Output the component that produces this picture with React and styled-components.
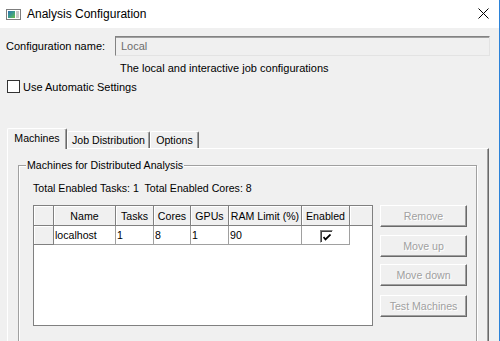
import React from 'react';
import styled, { createGlobalStyle } from 'styled-components';

const GlobalStyle = createGlobalStyle`
  html, body {
    margin: 0;
    padding: 0;
    background: #f0f0f0;
  }
  body {
    font-family: 'Liberation Sans', Arial, sans-serif;
    color: #000;
  }
`;

const columns = [
  { label: 'Name', width: 62 },
  { label: 'Tasks', width: 38 },
  { label: 'Cores', width: 37 },
  { label: 'GPUs', width: 38 },
  { label: 'RAM Limit (%)', width: 73 },
  { label: 'Enabled', width: 48 },
];

const machines = [{ name: 'localhost', tasks: '1', cores: '8', gpus: '1', ram: '90', enabled: true }];

const buttons = [
  { label: 'Remove', top: 0 },
  { label: 'Move up', top: 8 },
  { label: 'Move down', top: 7 },
  { label: 'Test Machines', top: 9 },
];

function App() {
  return (
    <>
      <GlobalStyle />
      <Window>
        <TitleBar>
          <AppIcon />
          <TitleText>Analysis Configuration</TitleText>
          <CloseGlyph />
        </TitleBar>
        <Body>
          <NameRow>
            <FieldLabel>Configuration name:</FieldLabel>
            <NameInput value="Local" readOnly disabled />
          </NameRow>
          <Description>The local and interactive job configurations</Description>
          <CheckRow>
            <Box />
            <span>Use Automatic Settings</span>
          </CheckRow>

          <TabStrip>
            <Tab $active $w={60}>Machines</Tab>
            <Tab $w={83}>Job Distribution</Tab>
            <Tab $w={49}>Options</Tab>
          </TabStrip>

          <Panel>
            <GroupBox>
              <Legend>Machines for Distributed Analysis</Legend>
              <GroupContent>
                <Totals>Total Enabled Tasks: 1&nbsp; Total Enabled Cores: 8</Totals>
                <ContentRow>
                  <Grid>
                    <HeadCell />
                    {columns.map((c) => (
                      <HeadCell key={c.label}>{c.label}</HeadCell>
                    ))}
                    <HeadCell $last />

                    {machines.map((m) => (
                      <React.Fragment key={m.name}>
                        <HeadCell />
                        <DataCell>{m.name}</DataCell>
                        <DataCell>{m.tasks}</DataCell>
                        <DataCell>{m.cores}</DataCell>
                        <DataCell>{m.gpus}</DataCell>
                        <DataCell>{m.ram}</DataCell>
                        <DataCell $center>
                          <MiniCheck>{m.enabled && <CheckMark />}</MiniCheck>
                        </DataCell>
                        <Filler />
                      </React.Fragment>
                    ))}
                  </Grid>
                  <ButtonColumn>
                    {buttons.map((b) => (
                      <ClassicButton key={b.label} $top={b.top} disabled>
                        {b.label}
                      </ClassicButton>
                    ))}
                  </ButtonColumn>
                </ContentRow>
              </GroupContent>
            </GroupBox>
          </Panel>
        </Body>
      </Window>
    </>
  );
}

export default App;

function AppIcon() {
  return (
    <svg width="15" height="11" viewBox="0 0 15 11">
      <defs>
        <linearGradient id="ic" x1="0" y1="0" x2="1" y2="1">
          <stop offset="0" stopColor="#2f6fb3" />
          <stop offset="0.5" stopColor="#3c9c8a" />
          <stop offset="1" stopColor="#6cbf4a" />
        </linearGradient>
      </defs>
      <rect x="0.5" y="0.5" width="14" height="10" fill="#fff" stroke="#7d7d7d" />
      <rect x="2" y="2" width="7" height="7" fill="url(#ic)" />
      <rect x="10" y="2" width="3" height="7" fill="#c9c9c9" />
    </svg>
  );
}

function CloseGlyph() {
  return (
    <CloseSvg width="11" height="11" viewBox="0 0 11 11">
      <path d="M0.5 0.5 L10.5 10.5 M10.5 0.5 L0.5 10.5" stroke="#000" strokeWidth="1" />
    </CloseSvg>
  );
}

function CheckMark() {
  return (
    <svg width="8" height="7" viewBox="0 0 8 7">
      <path d="M0.5 3 L2.5 5.5 L7.5 0.5" stroke="#000" strokeWidth="1.8" fill="none" />
    </svg>
  );
}

const Window = styled.div`
  width: 500px;
  height: 341px;
  box-sizing: border-box;
  border-right: 1px solid #2b82d9;
  background: #f0f0f0;
  display: flex;
  flex-direction: column;
  overflow: hidden;
`;

const TitleBar = styled.div`
  height: 28px;
  flex: 0 0 28px;
  background: #fff;
  display: flex;
  align-items: center;
  padding-left: 6px;
  gap: 6px;
  font-size: 12px;
`;

const TitleText = styled.div`
  flex: 1;
  padding-bottom: 1px;
`;

const CloseSvg = styled.svg`
  margin-right: 10px;
  margin-bottom: 2px;
`;

const Body = styled.div`
  flex: 1;
  min-height: 0;
  display: flex;
  flex-direction: column;
  padding: 8px 9px 0 6px;
  font-size: 11px;
`;

const NameRow = styled.div`
  display: flex;
  align-items: center;
  height: 20px;
`;

const FieldLabel = styled.div`
  width: 109px;
  flex: 0 0 109px;
`;

const NameInput = styled.input`
  flex: 1;
  height: 20px;
  box-sizing: border-box;
  margin: 0;
  padding: 0 0 0 5px;
  border: 1px solid;
  border-color: #828282 #e3e3e3 #e3e3e3 #828282;
  box-shadow: inset 0 1px 0 #a0a0a0;
  background: #f0f0f0;
  color: #6d6d6d;
  -webkit-text-fill-color: #6d6d6d;
  opacity: 1;
  font-family: inherit;
  font-size: 11px;
  outline: none;
`;

const Description = styled.div`
  margin: 6px 0 0 114px;
  line-height: 13px;
`;

const CheckRow = styled.div`
  display: flex;
  align-items: center;
  gap: 3px;
  height: 14px;
  margin-top: 5px;
  padding-left: 1px;
`;

const Box = styled.div`
  width: 13px;
  height: 13px;
  box-sizing: border-box;
  border: 1px solid #333;
  background: #fff;
`;

const TabStrip = styled.div`
  display: flex;
  align-items: flex-end;
  margin-top: 35px;
  padding-left: 1px;
  font-size: 10.6px;
`;

const Tab = styled.div`
  width: ${(p) => p.$w}px;
  height: ${(p) => (p.$active ? 21 : 17)}px;
  box-sizing: border-box;
  display: flex;
  align-items: center;
  justify-content: center;
  background: #f0f0f0;
  border-top: 1px solid #fff;
  border-left: 1px solid #fff;
  border-right: 1px solid #696969;
  box-shadow: inset -1px 0 0 #a0a0a0;
  border-radius: 2px 2px 0 0;
  ${(p) =>
    p.$active &&
    `
    position: relative;
    z-index: 1;
    margin-bottom: -1px;
    padding-bottom: 2px;
  `}
`;

const Panel = styled.div`
  flex: 1 0 auto;
  margin: 0 1px;
  border: 1px solid;
  border-color: #fff #696969 #696969 #fff;
  box-shadow: inset -1px -1px 0 #a0a0a0;
  padding: 10px 11px 0 10px;
`;

const GroupBox = styled.fieldset`
  margin: 0;
  padding: 0;
  min-inline-size: 0;
  border: 1px solid #a0a0a0;
  box-shadow: inset 1px 1px 0 #fff, 1px 1px 0 #fff;
`;

const Legend = styled.legend`
  margin-left: 7px;
  padding: 0 1px;
  font-size: 10.6px;
  line-height: 13px;
  background: #f0f0f0;
`;

const GroupContent = styled.div`
  padding: 10px 9px 40px 14px;
  font-size: 10.6px;
`;

const Totals = styled.div`
  line-height: 13px;
  margin-bottom: 10px;
`;

const ContentRow = styled.div`
  display: flex;
  align-items: flex-start;
  gap: 7px;
`;

const Grid = styled.div`
  width: 340px;
  height: 121px;
  box-sizing: border-box;
  border: 1px solid #808080;
  background: #fff;
  display: grid;
  grid-template-columns: 20px ${columns.map((c) => `${c.width}px`).join(' ')} 1fr;
  grid-template-rows: 20px 19px;
  align-content: start;
`;

const HeadCell = styled.div`
  background: #f0f0f0;
  border-right: ${(p) => (p.$last ? 'none' : '1px solid #808080')};
  border-bottom: 1px solid #808080;
  box-shadow: inset 1px 1px 0 #fff;
  display: flex;
  align-items: center;
  justify-content: center;
  white-space: nowrap;
`;

const DataCell = styled.div`
  border-right: 1px solid #a0a0a0;
  border-bottom: 1px solid #a0a0a0;
  padding-left: 1px;
  display: flex;
  align-items: ${(p) => (p.$center ? 'flex-start' : 'center')};
  justify-content: ${(p) => (p.$center ? 'center' : 'flex-start')};
  padding-top: ${(p) => (p.$center ? '4px' : '0')};
  color: #000;
`;

const Filler = styled.div`
  background: #fff;
`;

const MiniCheck = styled.div`
  width: 13px;
  height: 13px;
  box-sizing: border-box;
  border: 1px solid;
  border-color: #808080 #fff #fff #808080;
  box-shadow: inset 1px 1px 0 #404040;
  background: #fff;
  display: flex;
  align-items: center;
  justify-content: center;
  padding: 1px 0 0 1px;
`;

const ButtonColumn = styled.div`
  display: flex;
  flex-direction: column;
  width: 87px;
`;

const ClassicButton = styled.button`
  height: 22px;
  margin: ${(p) => p.$top}px 0 0 0;
  padding: 0;
  background: #f0f0f0;
  border: 1px solid;
  border-color: #fff #696969 #696969 #fff;
  box-shadow: inset -1px -1px 0 #a0a0a0;
  color: #a0a0a0;
  text-shadow: 1px 1px 0 #fff;
  font-family: inherit;
  font-size: 10.6px;
  border-radius: 0;
`;
